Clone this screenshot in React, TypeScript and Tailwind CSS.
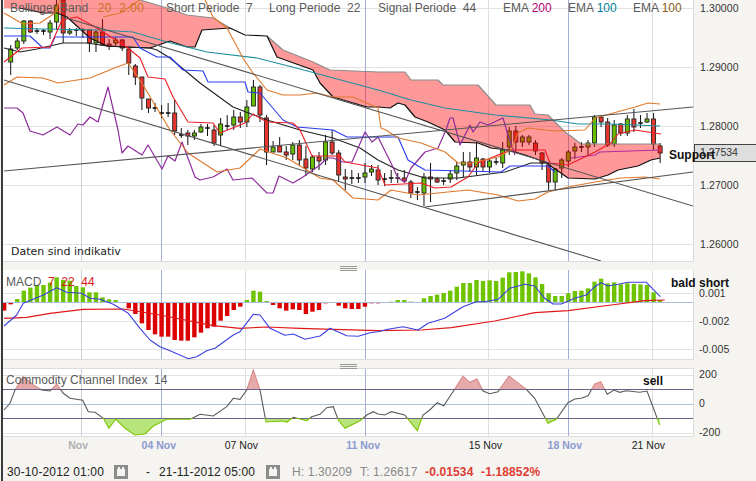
import React from "react";

type C = [number, number, number, number, string?];
const X = (i: number) => 10.7 + 6.56 * i;

const candles: C[] = [
  [49,62,45,75,"g"],[41,48,38,50,"g"],[21,41,20,44,"g"],[21,32,20,33,"r"],[31,31,28,34],[31,31,29,35],[23,32,20,39,"g"],[5,22,0,30,"g"],[0,33,0,43,"r"],[31,33,28,35,"g"],
  [30,30,28,36],[30,30,28,38],[30,43,30,52,"r"],[32,43,30,52,"g"],[32,45,19,45,"r"],[44,46,39,50,"r"],[40,43,37,47,"g"],[40,48,39,51,"r"],[49,63,47,75,"r"],[66,77,64,85,"r"],
  [77,98,77,110,"r"],[99,108,99,113,"r"],[108,108,103,112],[113,113,105,118],[113,113,103,117],[113,131,100,135,"r"],[135,135,128,138],[133,136,130,145,"r"],[133,136,130,140,"g"],[127,132,124,133,"g"],
  [128,128,124,136],[130,143,125,146,"r"],[124,135,118,146,"g"],[126,126,115,130],[117,125,110,130,"g"],[117,122,112,128,"r"],[107,122,100,127,"g"],[87,106,80,106,"g"],[87,115,85,122,"r"],[118,152,115,165,"r"],
  [147,152,141,152,"g"],[146,152,137,152,"r"],[152,155,146,160,"r"],[145,154,142,160,"g"],[145,160,140,166,"r"],[159,168,146,176,"r"],[157,169,155,172,"g"],[157,161,152,170,"r"],[142,160,135,165,"g"],[142,153,130,155,"r"],
  [153,175,150,181,"r"],[177,179,169,190,"r"],[178,178,170,184],[178,178,173,183],[173,177,163,183,"g"],[169,172,165,176,"g"],[170,180,165,185,"r"],[179,179,173,186],[178,178,170,183],[178,178,173,183],
  [178,181,170,183,"r"],[182,193,180,198,"r"],[192,192,187,200],[177,193,173,206,"g"],[177,179,163,202,"r"],[179,182,177,183,"r"],[181,181,178,185],[174,179,170,183,"g"],[166,173,162,180,"g"],[162,165,152,177,"g"],
  [162,167,152,172,"r"],[158,167,142,175,"g"],[159,167,158,171,"r"],[161,167,158,173,"g"],[162,162,157,165],[150,163,142,168,"g"],[131,147,127,155,"g"],[131,142,126,153,"r"],[137,142,135,147,"g"],[137,142,135,145,"g"],
  [143,151,140,155,"r"],[153,163,152,170,"r"],[165,182,163,190,"r"],[169,182,168,190,"g"],[160,168,158,178,"g"],[152,161,150,167,"g"],[147,151,143,159,"g"],[147,147,142,152],[143,147,140,155,"g"],[117,143,115,147,"g"],
  [117,122,115,127,"r"],[122,145,118,147,"r"],[125,144,120,147,"g"],[124,133,123,136,"r"],[119,133,115,136,"g"],[119,127,109,132,"r"],[123,123,115,128],[119,122,113,123,"g"],[119,144,113,150,"r"],[146,153,143,163,"r"],
];

const cloudA = "4,0 140,0 167,8 187,15 213,18 230,28 202,30 195,47 187,47 170,41 150,48 123,47 107,46 90,38 67,17 57,13 43,13 23,9 4,8";
const cloudB = "267,36 283,50 313,62 330,70 378,72 405,72 411,80 438,80 443,85 478,85 496,105 530,105 535,114 548,115 565,132 572,137 581,144 595,144 660,144 660,158 651,160 638,166 618,170 608,175 595,179 568,178 545,162 525,155 508,150 491,148 478,143 455,142 445,130 428,122 415,117 405,105 398,103 390,108 378,107 367,107 333,97 320,83 313,70 277,57";
const cloudTopA = "140,0 167,8 187,15 213,18 230,28";
const cloudTopB = "267,36 283,50 313,62 330,70 378,72 405,72 411,80 438,80 443,85 478,85 496,105 530,105 535,114 548,115 565,132 572,137 581,144 595,144 660,144";
const cloudBotA = "20,8 43,13 57,13 67,17 90,38 107,46 123,47 150,48 170,41 187,47 195,47 202,30 230,28 245,35 267,36 277,57 313,70 320,83 333,97 367,107 378,107 390,108 398,103 405,105 415,117 428,122 445,130 455,142 478,143 491,148 508,150 525,155 545,162 568,178 595,179 608,175 618,170 638,166 651,160 660,158";
const kijun = "4,48 20,52 37,49 63,43 87,43 107,46 150,48 157,50 170,58 200,83 233,107 267,120 300,130 333,138 360,148 378,160 398,170 425,178 458,178 505,172 531,163 548,163";
const redL = "4,62 22,48 50,47 62,20 77,17 97,28 128,48 140,58 148,77 165,79 173,97 188,122 213,123 220,133 245,123 253,114 267,122 293,123 300,130 312,156 340,156 345,162 378,168 385,185 421,183 435,188 451,187 468,177 478,163 511,150 545,150 550,163 568,165 595,152 611,143 618,134 635,130 648,132 661,134";
const orangeLow = "4,85 17,77 43,78 58,83 90,78 117,67 128,63 140,80 170,130 188,153 217,172 240,168 260,149 287,158 320,178 333,180 353,198 378,200 391,190 418,195 438,193 468,190 498,195 518,201 535,199 548,192 568,187 595,182 621,178 645,177 660,179";
const orangeUp1 = "4,13 23,24 40,23 55,13 60,0";
const orangeUp2 = "103,17 120,13 140,0";
const orangeUp3 = "205,0 213,17 227,28 243,58 253,73 267,90 283,95 300,95 317,93 333,97 353,97 378,108 381,128 386,130 398,138 421,143 445,152 458,163 471,163 498,157 511,150 518,133 528,128 555,131 585,130 595,118 635,107 648,103 660,104";
const blueL = "4,36 30,36 43,48 50,48 55,37 133,37 140,48 157,57 170,57 183,70 203,71 208,82 245,82 248,92 260,93 283,120 297,127 333,130 347,137 378,137 398,137 408,160 425,170 501,172 510,166 548,166 555,172";
const purple1 = "4,108 17,108 23,113 30,131 43,135 57,127 70,135 78,124 83,125 90,117 98,122 108,87 118,130 122,153 128,146 142,155 148,145 162,169 168,156 175,161 182,142 195,177 200,180 213,177 227,169 233,180 252,178 267,193 273,193 279,176 293,183 303,177 320,165 327,158 333,158 343,162 352,162 365,132 372,142 378,137 391,163 398,178 405,182 411,168 425,152 438,148 446,130 450,118 453,118 460,145 470,125 473,132 480,122 488,125 503,118 508,135 515,155";
const purple2 = "571,158 595,155 600,152 660,150";
const teal = "4,28 43,29 100,30 133,32 167,42 207,52 257,58 300,69 378,90 411,100 445,108 495,115 551,120 578,124 611,124 660,126";

const zoomPts = (s: string, ox: number, oy: number) =>
  s.trim().split(/\s+/).map((p) => { const [a, b] = p.split(",").map(Number); return `${(ox + a / 3).toFixed(1)},${(oy + b / 3).toFixed(1)}`; }).join(" ");

const macdBlue = zoomPts("12,198 50,165 70,130 130,105 170,83 200,97 245,100 270,115 300,118 340,133 385,160 420,205 450,240 480,260 510,272 565,296 590,290 620,272 645,265 700,225 720,215 760,163 780,165 810,205 855,226 880,222 915,238 960,228 990,205 1040,227 1075,229 1110,218 1134,215", 0, 260) + " " + zoomPts("30,208 75,200 120,210 150,190 200,175 255,140 295,125 320,125 360,118 395,85 440,73 470,78 500,115 525,132 550,132 590,115 625,105 650,80 670,68 690,78 720,73 750,67 805,67 847,110", 378, 260);
const macdRed = zoomPts("12,175 80,172 150,160 250,148 370,147 480,165 640,197 720,205 800,201 900,205 1000,208 1134,212", 0, 260) + " " + zoomPts("130,210 220,203 350,183 470,158 570,152 700,135 800,122 860,120", 378, 260);
const histo = [152,133,117,92,83,77,75,68,52,60,62,78,82,97,97,112,118,120,127,145,162,190,210,223,230,230,240,242,242,232,218,205,200,182,168,150,140,120,92,95,123,135,145,152,148,150,162,155,150,130,126,137,145,147,147,140,130,130,127,125,120,120,125,127,115,108,104,99,92,80,69,69,60,63,61,63,53,37,36,34,40,52,72,100,108,108,100,93,92,85,65,56,70,67,73,70,72,73,75,97,120];

const cciPts = zoomPts("12,150 30,130 45,90 70,50 100,75 125,90 150,93 170,72 190,100 210,115 248,121 265,155 285,157 310,175 327,205 347,177 375,205 405,225 435,222 460,198 500,178 570,178 600,163 640,168 680,140 700,115 720,118 740,90 760,30 780,90 798,186 850,183 860,187 880,172 920,182 935,170 960,163 980,143 1000,140 1015,180 1035,205 1080,182 1100,165 1120,155 1134,162", 0, 360) + " " + zoomPts("20,165 40,155 80,165 118,212 135,165 155,150 178,128 197,137 225,95 255,48 275,67 297,57 315,93 335,101 360,95 393,48 445,88 470,115 510,190 535,178 570,128 590,117 610,115 630,107 650,72 668,65 688,103 708,90 725,97 745,92 785,97 807,93 845,195", 378, 360);

const vGrid: [number, string][] = [[81.5, "#cfcfd6"], [161.5, "#a4afd8"], [245.5, "#dfdfdf"], [365.5, "#a4afd8"], [488.5, "#dfdfdf"], [568.5, "#a4afd8"], [652.5, "#dfdfdf"]];

function VGrid({ y1, y2 }: { y1: number; y2: number }) {
  return <>{vGrid.map(([x, c]) => <line key={x} x1={x} x2={x} y1={y1} y2={y2} stroke={c} strokeWidth={1} />)}</>;
}
function HGrid({ ys, color = "#e2e2e2" }: { ys: number[]; color?: string }) {
  return <>{ys.map((y) => <line key={y} x1={3} x2={693} y1={y} y2={y} stroke={color} strokeWidth={1} />)}</>;
}
function Line({ pts, c, w = 1.1 }: { pts: string; c: string; w?: number }) {
  return <polyline points={pts} fill="none" stroke={c} strokeWidth={w} strokeLinejoin="round" />;
}

function MainChart() {
  return (
    <svg viewBox="3 0 690 261" className="block w-[690px] h-[261px]">
      <HGrid ys={[8.5, 67.5, 126.5, 185.5, 244.5]} />
      <VGrid y1={0} y2={261} />
      {candles.map(([t, b, wt, wb, k], i) => {
        const x = X(i);
        return (
          <g key={i}>
            <line x1={x} x2={x} y1={wt} y2={wb} stroke="#111" strokeWidth={1} />
            {k ? (
              <rect x={x - 2} y={t} width={4} height={b - t} fill={k === "g" ? "#66bf00" : "#e8352e"} stroke="#222" strokeWidth={0.9} />
            ) : (
              <line x1={x - 2.3} x2={x + 2.3} y1={t} y2={t} stroke="#111" strokeWidth={1.6} />
            )}
          </g>
        );
      })}
      <polygon points={cloudA} fill="#ff0000" fillOpacity={0.4} />
      <polygon points={cloudB} fill="#ff0000" fillOpacity={0.4} />
      <Line pts={cloudTopA} c="#8c8c8c" w={1.2} />
      <Line pts={cloudTopB} c="#8c8c8c" w={1.2} />
      <Line pts={cloudBotA} c="#111" w={1.2} />
      <Line pts={kijun} c="#222" w={1.1} />
      <Line pts={teal} c="#1f8f9f" w={1.1} />
      <Line pts={purple1} c="#8e2c9c" w={1.2} />
      <Line pts={purple2} c="#b02ca0" w={1.1} />
      <Line pts={blueL} c="#2a3cf0" w={1.1} />
      <Line pts={redL} c="#f01c24" w={1.1} />
      <Line pts={orangeLow} c="#e0782a" w={1.1} />
      <Line pts={orangeUp1} c="#e0782a" w={1.1} />
      <Line pts={orangeUp2} c="#e0782a" w={1.1} />
      <Line pts={orangeUp3} c="#e0782a" w={1.1} />
      <line x1={63} y1={17} x2={693} y2={206} stroke="#555" strokeWidth={1.1} />
      <line x1={4} y1={80} x2={601} y2={261} stroke="#555" strokeWidth={1.1} />
      <line x1={4} y1={171} x2={693} y2={107} stroke="#555" strokeWidth={1.1} />
      <line x1={425} y1={207} x2={693} y2={172} stroke="#555" strokeWidth={1.1} />
    </svg>
  );
}

function MacdChart() {
  return (
    <svg viewBox="3 270 690 89" className="block w-[690px] h-[89px]">
      <HGrid ys={[293.5, 321.5, 349.5]} />
      <VGrid y1={270} y2={359} />
      {histo.map((z, i) => {
        const x = X(i - 1);
        const y = 260 + z / 3;
        const up = y < 302.5;
        return (
          <rect key={i} x={x - 2.2} width={4.4} y={Math.min(y, 302.5)} height={Math.abs(y - 302.5)} fill={up ? "#6fc400" : "#dc0000"} />
        );
      })}
      <line x1={3} x2={693} y1={302.5} y2={302.5} stroke="#a8bcdc" strokeWidth={1} />
      <Line pts={macdRed} c="#e01818" w={1.2} />
      <Line pts={macdBlue} c="#3c40e0" w={1.1} />
    </svg>
  );
}

function CciChart() {
  const pts = cciPts.split(" ");
  const area = (yb: number) => `M${pts[0].split(",")[0]},${yb} L${pts.join(" L")} L${pts[pts.length - 1].split(",")[0]},${yb} Z`;
  return (
    <svg viewBox="3 369 690 67" className="block w-[690px] h-[67px]">
      <defs>
        <clipPath id="cciTop"><rect x={3} y={369} width={690} height={20} /></clipPath>
        <clipPath id="cciMid"><rect x={3} y={389} width={690} height={29} /></clipPath>
        <clipPath id="cciBot"><rect x={3} y={418} width={690} height={18} /></clipPath>
      </defs>
      <HGrid ys={[375.5, 433.5]} />
      <VGrid y1={369} y2={436} />
      <line x1={3} x2={693} y1={404.5} y2={404.5} stroke="#a8c0dc" strokeWidth={1} />
      <path d={area(389)} fill="#e6aaaa" clipPath="url(#cciTop)" />
      <path d={area(418)} fill="#b8e47c" clipPath="url(#cciBot)" />
      <line x1={3} x2={693} y1={389.5} y2={389.5} stroke="#6c6488" strokeWidth={1} />
      <line x1={3} x2={693} y1={418.5} y2={418.5} stroke="#6c6488" strokeWidth={1} />
      <polyline points={cciPts} fill="none" stroke="#d98a8a" strokeWidth={1.1} clipPath="url(#cciTop)" />
      <polyline points={cciPts} fill="none" stroke="#5a5a5a" strokeWidth={1.1} clipPath="url(#cciMid)" />
      <polyline points={cciPts} fill="none" stroke="#7cc400" strokeWidth={1.1} clipPath="url(#cciBot)" />
    </svg>
  );
}

function Grip() {
  return (
    <div className="h-[8px] w-[691px] flex justify-center items-end">
      <div className="relative z-10 translate-y-px w-[17px] h-[5px] border-y border-[#999] flex items-center">
        <div className="w-full h-px bg-[#999]" />
      </div>
    </div>
  );
}

function Cal() {
  return (
    <svg width="14" height="14" viewBox="0 0 14 14" className="block">
      <rect width="14" height="14" fill="#8c8c8c" />
      <rect x="3" y="4" width="8" height="7" fill="#f5f4f1" />
      <rect x="4" y="2" width="2" height="2" fill="#f5f4f1" />
      <rect x="8" y="2" width="2" height="2" fill="#f5f4f1" />
    </svg>
  );
}

const axisText = "h-4 flex items-center text-[#333] text-[10.5px] tracking-[0.1px]";

export default function App() {
  return (
    <div className="relative w-[756px] h-[481px] overflow-hidden bg-[#f5f4f1] font-['Liberation_Sans',sans-serif] pl-[1px]">
      <div className="border-l-[2px] border-[#3c3c3c] h-full">
        <div className="flex">
          <div className="relative w-[691px] h-[262px] bg-white border-r border-b border-[#dcdcdc]">
            <MainChart />
            <div className="absolute left-[7px] top-[1px] flex text-[12px] text-[#5a5a5a] whitespace-pre leading-[14px]">
              <span className="w-[156px]">Bollinger Band  <span className="ml-[3px] text-[#c87020] tracking-[0.4px]">20  2.00</span></span>
              <span className="w-[103px]">Short Periode  7</span>
              <span className="w-[109px]">Long Periode  22</span>
              <span className="w-[125px]">Signal Periode  44</span>
              <span className="w-[65px]">EMA <span className="text-[#b80078]">200</span></span>
              <span className="w-[65px]">EMA <span className="text-[#007f99]">100</span></span>
              <span>EMA <span className="text-[#8a6020]">100</span></span>
            </div>
            <div className="absolute left-[8px] top-[245px] font-['DejaVu_Sans',sans-serif] text-[11px] leading-[14px] text-[#222]">Daten sind indikativ</div>
            <div className="absolute left-[666px] top-[148px] font-bold text-[12px] leading-[14px] text-[#111] z-10 w-[60px]">Support</div>
          </div>
          <div className="relative flex-1 pl-[6px] pt-px flex flex-col gap-[43px]">
            {["1.30000", "1.29000", "1.28000", "1.27000", "1.26000"].map((t) => (
              <div key={t} className={axisText}>{t}</div>
            ))}
            <div className="absolute left-0 top-[144px] w-[63px] h-[18px] bg-[#dedede] border border-[#444] flex items-center pl-[5px] text-[10.5px] text-[#333]">1.27534</div>
          </div>
        </div>
        <Grip />
        <div className="flex">
          <div className="relative w-[691px] h-[90px] bg-white border-r border-b border-[#dcdcdc]">
            <MacdChart />
            <div className="absolute left-[3px] top-[5px] text-[12px] leading-[14px] text-[#5a5a5a] whitespace-pre">MACD  <span className="text-[#d81818]">7  22  44</span></div>
            <div className="absolute left-[668px] top-[6px] font-bold text-[12px] leading-[14px] text-[#111] z-10 whitespace-nowrap">bald short</div>
          </div>
          <div className="flex-1 pl-[5px] pt-[16px] flex flex-col gap-[12px]">
            {["0.001", "-0.002", "-0.005"].map((t) => <div key={t} className={axisText}>{t}</div>)}
          </div>
        </div>
        <Grip />
        <div className="flex">
          <div className="relative w-[691px] h-[69px] bg-white border-r border-y border-[#dcdcdc]">
            <CciChart />
            <div className="absolute left-[3px] top-[4px] text-[12px] leading-[14px] text-[#5a5a5a] whitespace-pre">Commodity Channel Index  14</div>
            <div className="absolute left-[640px] top-[5px] font-bold text-[12px] leading-[14px] text-[#111]">sell</div>
          </div>
          <div className="flex-1 pl-[5px] -mt-px flex flex-col gap-[13px]">
            {["200", "0", "-200"].map((t) => <div key={t} className={axisText}>{t}</div>)}
          </div>
        </div>
        <div className="flex h-[12px] -mt-px items-center text-[10.5px] font-bold text-right whitespace-nowrap">
          <div className="w-[85px] text-[#b0b0b0]">Nov</div>
          <div className="w-[88px] text-[#8a9ad0]">04 Nov</div>
          <div className="w-[82px] text-[#222] font-normal">07 Nov</div>
          <div className="w-[122px] text-[#8a9ad0]">11 Nov</div>
          <div className="w-[122px] text-[#222] font-normal">15 Nov</div>
          <div className="w-[80px] text-[#8a9ad0]">18 Nov</div>
          <div className="w-[83px] text-[#222] font-normal">21 Nov</div>
        </div>
        <div className="flex h-[32px] pt-[7px] items-center pl-[4px] text-[12px] text-[#222] tracking-[0.14px] whitespace-nowrap">
          <span className="w-[107px]">30-10-2012 01:00</span>
          <Cal />
          <span className="ml-[18px] w-[13px]">-</span>
          <span className="w-[107px]">21-11-2012 05:00</span>
          <Cal />
          <span className="ml-[12px] text-[#888] w-[68px]">H: 1.30209</span>
          <span className="text-[#888] w-[65px]">T: 1.26617</span>
          <span className="text-[#e03c31] font-bold w-[56px]">-0.01534</span>
          <span className="text-[#e03c31] font-bold">-1.18852%</span>
        </div>
      </div>
    </div>
  );
}
